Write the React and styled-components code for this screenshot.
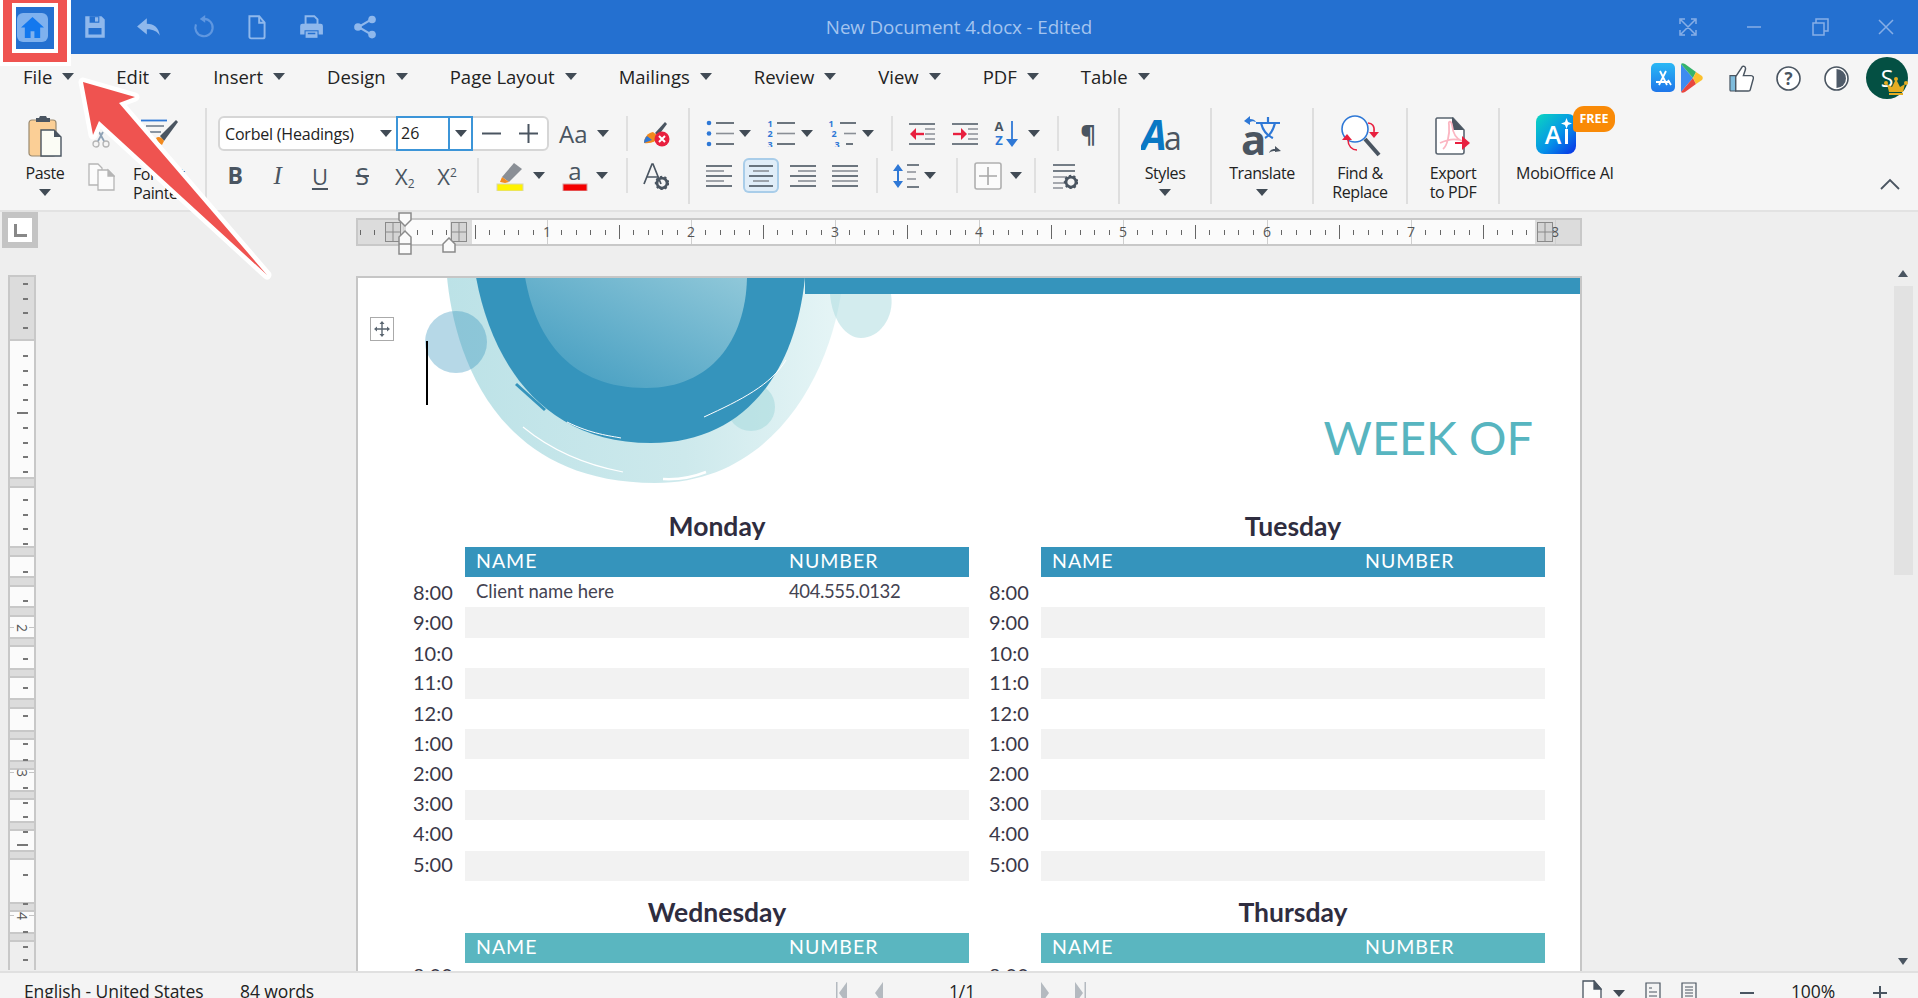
import React from 'react';
import styled, { createGlobalStyle } from 'styled-components';

const UI_FONT = '"Open Sans", "Noto Sans", sans-serif';
const DOC_FONT = 'Lato, "Open Sans", sans-serif';
const DARK = '#4a5561';
const BLUE = '#2e78d6';
const RED = '#e8203f';
const TITLE_ICON = '#8fb8ec';

const GlobalStyle = createGlobalStyle`
  html, body { margin: 0; padding: 0; height: 100%; overflow: hidden; }
  #root { height: 100%; }
  * { box-sizing: border-box; }
`;

const Window = styled.div`
  position: relative;
  width: 1918px;
  height: 998px;
  display: flex;
  flex-direction: column;
  overflow: hidden;
  background: #f5f5f5;
  font-family: ${UI_FONT};
  color: #222;
`;

/* title bar */
const TitleBar = styled.header`
  position: relative;
  flex: 0 0 54px;
  display: flex;
  align-items: center;
  background: #2470d0;
  padding-left: 17px;
`;

const HomeTile = styled.div`
  width: 31px;
  height: 29px;
  margin-right: 20px;
  border-radius: 6px;
  background: #7fb1ee;
  display: flex;
  align-items: center;
  justify-content: center;
`;

const QuickTool = styled.div`
  width: 54px;
  display: flex;
  justify-content: center;
`;

const TitleText = styled.div`
  position: absolute;
  left: 0;
  right: 0;
  text-align: center;
  font-size: 18.8px;
  color: #a3c4ef;
  letter-spacing: -0.1px;
`;

const WindowControls = styled.div`
  margin-left: auto;
  margin-right: -1px;
  display: flex;
`;

const WindowControl = styled.div`
  width: 66px;
  display: flex;
  justify-content: center;
`;

/* menu row */
const MenuBar = styled.nav`
  flex: 0 0 46px;
  display: flex;
  align-items: center;
  gap: 42px;
  padding: 0 0 2px 23px;
`;

const MenuItem = styled.div`
  display: flex;
  align-items: center;
  gap: 10px;
  font-size: 18.5px;
  color: #222;
`;

const Caret = styled.span`
  display: inline-block;
  flex: none;
  width: 0;
  height: 0;
  border-left: 6px solid transparent;
  border-right: 6px solid transparent;
  border-top: 7px solid #414b55;
`;

const MenuRight = styled.div`
  position: absolute;
  right: 10px;
  top: 56px;
  display: flex;
  align-items: center;
  height: 44px;
`;

const MenuIcon = styled.div`
  display: flex;
  justify-content: center;
  width: ${(p) => p.$w}px;
  margin-left: ${(p) => p.$ml || 0}px;
`;

const Avatar = styled.div`
  position: relative;
  width: 42px;
  height: 42px;
  border-radius: 50%;
  background: #045043;
  color: #fff;
  font-size: 23px;
  line-height: 42px;
  text-align: center;
  margin-left: 6px;
`;

const Crown = styled.svg`
  position: absolute;
  right: 0;
  bottom: 4px;
`;

/* ribbon */
const Ribbon = styled.section`
  flex: 0 0 112px;
  display: flex;
  padding-top: 8px;
  border-bottom: 2px solid #e2e2e2;
`;

const Group = styled.div`
  position: relative;
  flex: 0 0 ${(p) => p.$w}px;
  height: 96px;
  border-right: ${(p) => (p.$last ? 'none' : '2px solid #dedede')};
`;

const LabeledGroup = styled(Group)`
  display: flex;
  flex-direction: column;
  align-items: center;
  padding-top: 7px;
`;

const IconSlot = styled.div`
  height: 41px;
  display: flex;
  align-items: center;
  justify-content: center;
`;

const Label = styled.div`
  margin-top: 8px;
  font-size: 16px;
  line-height: 19px;
  letter-spacing: -0.4px;
  text-align: center;
  white-space: pre-line;
  color: #222;
`;

const LabelCaret = styled(Caret)`
  margin-top: 6px;
`;

const ClipboardGroup = styled(Group)`
  display: flex;
`;

const PasteCol = styled.div`
  width: 90px;
  display: flex;
  flex-direction: column;
  align-items: center;
  padding-top: 7px;
`;

const SmallCol = styled.div`
  width: 42px;
  margin-left: -10px;
  display: flex;
  flex-direction: column;
  align-items: center;
  padding-top: 22px;
  gap: 15px;
`;

const PainterCol = styled.div`
  flex: 1;
  padding: 11px 0 0 11px;
`;

const PainterIconWrap = styled.div`
  height: 36px;
  padding-left: 7px;
`;

const PainterLabel = styled(Label)`
  margin-top: 10px;
  text-align: left;
`;

const ToolGroup = styled(Group)`
  display: flex;
  flex-direction: column;
  gap: 7px;
  padding-top: 8px;
`;

const ToolRow = styled.div`
  height: 35px;
  display: flex;
  align-items: center;
  padding-left: ${(p) => p.$pl || 0}px;
`;

const Tool = styled.div`
  flex: 0 0 ${(p) => p.$w}px;
  height: 35px;
  display: flex;
  align-items: center;
  justify-content: ${(p) => (p.$pl !== undefined ? 'flex-start' : 'center')};
  padding-left: ${(p) => p.$pl || 0}px;
  gap: ${(p) => p.$gap || 0}px;
  border-radius: 6px;
  ${(p) => p.$active && 'background: #e0edf8; box-shadow: inset 0 0 0 2px #a9cde9; margin: 0 3px; flex-basis: 36px;'}
`;

const ToolSep = styled.div`
  flex: none;
  width: 2px;
  height: 35px;
  background: #e0e0e0;
  margin-left: ${(p) => p.$ml || 0}px;
`;

const FontCombo = styled.div`
  flex: 0 0 331px;
  height: 35px;
  display: flex;
  align-items: center;
  background: #fff;
  border: 2px solid #d6d6d6;
  border-radius: 6px;
`;

const FontName = styled.div`
  flex: 0 0 176px;
  display: flex;
  align-items: center;
  justify-content: space-between;
  padding: 0 4px 0 5px;
  font-size: 16px;
  letter-spacing: -0.2px;
`;

const SizeBox = styled.div`
  flex: 0 0 77px;
  height: 35px;
  display: flex;
  align-items: center;
  border: 2px solid #3c95d8;
  font-size: 16px;
`;

const SizeValue = styled.div`
  flex: 1;
  padding-left: 3px;
  height: 100%;
  line-height: 31px;
  border-right: 2px solid #3c95d8;
`;

const SizeArrow = styled.div`
  flex: 0 0 21px;
  display: flex;
  justify-content: center;
`;

const StepButton = styled.div`
  flex: 1;
  display: flex;
  justify-content: center;
`;

const CollapseButton = styled.svg`
  position: absolute;
  right: 18px;
  bottom: 14px;
`;

const LetterTool = styled.span`
  font-family: ${(p) => (p.$serif ? '"Liberation Serif", serif' : UI_FONT)};
  font-size: ${(p) => p.$size || 22}px;
  font-weight: ${(p) => p.$weight || 400};
  font-style: ${(p) => (p.$italic ? 'italic' : 'normal')};
  color: ${DARK};
  text-decoration: ${(p) => p.$decor || 'none'};
  text-decoration-thickness: 2px;
  text-underline-offset: 3px;
  line-height: 1;
`;

const Script = styled.sub`
  font-size: 12px;
  line-height: 0;
  vertical-align: ${(p) => (p.$up ? '8px' : '-3px')};
`;

/* workspace */
const Workspace = styled.main`
  flex: 1;
  min-height: 0;
  display: grid;
  grid-template-columns: 356px 1226px 1fr;
  grid-template-rows: 64px 1fr;
  background: #eeeeee;
  overflow: hidden;
`;

const RulerCorner = styled.div`
  width: 36px;
  height: 36px;
  margin-left: 2px;
  background: #fff;
  border: 6px solid #c4c4c4;
  display: flex;
  align-items: center;
  justify-content: center;
`;

const CornerGlyph = styled.div`
  width: 13px;
  height: 13px;
  border-left: 3px solid #888;
  border-bottom: 3px solid #888;
`;

const HRuler = styled.div`
  position: relative;
  width: 1226px;
  height: 28px;
  margin-top: 6px;
  display: flex;
  border: 2px solid #c8c8c8;
`;

const RulerPart = styled.div`
  flex: 0 0 ${(p) => p.$w}px;
  background: ${(p) => (p.$gray ? '#dcdcdc' : '#fbfbfb')};
`;

const HTick = styled.i`
  position: absolute;
  top: ${(p) => (p.$tall ? 5 : 10)}px;
  width: 1px;
  height: ${(p) => (p.$tall ? 14 : 5)}px;
  background: #666;
`;

const HLine = styled.i`
  position: absolute;
  top: 0;
  bottom: 0;
  width: 1px;
  background: #cfcfcf;
`;

const HNumber = styled.span`
  position: absolute;
  top: 2px;
  width: 14px;
  margin-left: -7px;
  text-align: center;
  font-size: 14px;
  line-height: 20px;
  color: #555;
`;

const RulerMark = styled.svg`
  position: absolute;
  left: ${(p) => p.$x}px;
  top: ${(p) => p.$y}px;
`;

const VRuler = styled.div`
  position: relative;
  width: 28px;
  height: 695px;
  margin: -1px 0 0 8px;
  display: flex;
  flex-direction: column;
  border-left: 2px solid #c8c8c8;
  border-right: 2px solid #c8c8c8;
`;

const VBand = styled.div`
  flex: 0 0 ${(p) => p.$h}px;
  background: ${(p) => (p.$gray ? '#dcdcdc' : '#fbfbfb')};
  ${(p) => p.$gray && 'border-top: 2px solid #c8c8c8; border-bottom: 2px solid #c8c8c8;'}
`;

const VTick = styled.i`
  position: absolute;
  right: 6px;
  width: ${(p) => (p.$long ? 11 : 5)}px;
  height: 1.5px;
  background: #777;
`;

const VNumber = styled.span`
  position: absolute;
  left: 5px;
  width: 14px;
  text-align: center;
  font-size: 14px;
  line-height: 14px;
  color: #555;
  transform: rotate(90deg);
  &::before, &::after {
    content: '';
    position: absolute;
    left: 6px;
    width: 1px;
    height: 5px;
    background: #c4c4c4;
  }
  &::before { top: -5px; }
  &::after { bottom: -6px; }
`;

const Page = styled.div`
  position: relative;
  background: #fff;
  border: 2px solid #c6c6c6;
  border-bottom: 0;
  overflow: hidden;
  font-family: ${DOC_FONT};
  color: #2f2d3f;
`;

const PageBanner = styled.div`
  position: relative;
  z-index: 1;
  height: 16px;
  margin-left: 447px;
  background: #3594bc;
`;

const Artwork = styled.svg`
  position: absolute;
  left: 63px;
  top: -1px;
`;

const MoveHandle = styled.div`
  position: absolute;
  z-index: 2;
  left: 12px;
  top: 39px;
  width: 24px;
  height: 24px;
  background: #fff;
  border: 1.5px solid #aaa;
  display: flex;
  align-items: center;
  justify-content: center;
`;

const TextCursor = styled.div`
  position: absolute;
  z-index: 2;
  left: 68px;
  top: 63px;
  width: 2px;
  height: 64px;
  background: #000;
`;

const WeekHeader = styled.div`
  position: relative;
  height: 218px;
  padding: 115px 47px 0 0;
  text-align: right;
  font-size: 46.8px;
  line-height: 56px;
  font-weight: 400;
  color: #57b5c0;
`;

const WeekGrid = styled.div`
  display: grid;
  grid-template-columns: 556px 556px;
  column-gap: 20px;
  row-gap: 17px;
  padding-left: 55px;
`;

const Day = styled.div`
  display: grid;
  grid-template-columns: 52px 1fr;
`;

const DayName = styled.h2`
  grid-column: 2;
  margin: 0;
  height: 35px;
  text-align: center;
  font-size: 26.5px;
  line-height: 29px;
  font-weight: 700;
  color: #2f2d3f;
`;

const DayHead = styled.div`
  grid-column: 2;
  height: 30px;
  display: grid;
  grid-template-columns: 313px 1fr;
  padding: 0 0 3px 11px;
  align-items: center;
  background: ${(p) => p.$color};
  color: #fff;
  font-size: 19.5px;
  letter-spacing: 1px;
`;

const Time = styled.div`
  grid-column: 1;
  width: 40px;
  height: 30.4px;
  overflow: hidden;
  white-space: nowrap;
  font-size: 20px;
  line-height: 30px;
  color: #3a3848;
  transform: translateY(${(p) => p.$shift}px);
`;

const Slot = styled.div`
  grid-column: 2;
  height: 30.4px;
  display: grid;
  grid-template-columns: 313px 1fr;
  padding: 0 0 2px 11px;
  align-items: center;
  background: ${(p) => (p.$even ? '#f2f2f2' : '#fff')};
  font-size: 18.5px;
  line-height: 26px;
  color: #444352;
`;

const PhoneCell = styled.span`
  letter-spacing: -0.4px;
`;

const Scrollbar = styled.div`
  grid-column: 3;
  grid-row: 1 / span 2;
  justify-self: end;
  width: 20px;
  margin-right: 5px;
  padding-top: 58px;
  display: flex;
  flex-direction: column;
  align-items: center;
  height: 759px;
`;

const ScrollArrow = styled.i`
  width: 0;
  height: 0;
  border-left: 5px solid transparent;
  border-right: 5px solid transparent;
  ${(p) => (p.$down ? 'border-top' : 'border-bottom')}: 7px solid #4a5561;
  ${(p) => p.$down && 'margin-top: auto; margin-bottom: 6px;'}
`;

const ScrollThumb = styled.div`
  width: 19px;
  height: 289px;
  margin-top: 9px;
  background: #e2e2e2;
`;

/* status bar */
const StatusBar = styled.footer`
  flex: 0 0 27px;
  display: flex;
  align-items: flex-start;
  background: #f4f4f4;
  border-top: 2px solid #e0e0e0;
  padding-top: 6px;
  font-size: 17.5px;
  letter-spacing: -0.1px;
  line-height: 24px;
  color: #222;
  overflow: hidden;
`;

const StatusText = styled.span`
  flex: 0 0 ${(p) => p.$w}px;
  padding-left: ${(p) => p.$pl || 0}px;
  text-align: ${(p) => p.$align || 'left'};
`;

const StatusIcon = styled.div`
  flex: 0 0 ${(p) => p.$w}px;
  height: 24px;
  display: flex;
  align-items: center;
  justify-content: center;
  padding-top: 4px;
`;

/* annotation */
const Highlight = styled.div`
  position: absolute;
  z-index: 5;
  left: 3px;
  top: -6px;
  width: 64px;
  height: 68px;
  border: 9px solid #ef5350;
  box-shadow: 0 0 0 4px #fff, inset 0 0 0 4px #fff;
`;

const ArrowOverlay = styled.svg`
  position: absolute;
  z-index: 5;
  left: 0;
  top: 0;
`;

const FreeBadge = styled.div`
  position: absolute;
  left: 37px;
  top: -7px;
  width: 42px;
  height: 26px;
  border-radius: 11px 11px 11px 4px;
  background: #f98a07;
  color: #fff;
  font-size: 12.5px;
  font-weight: 700;
  line-height: 26px;
  text-align: center;
`;

const MobiTool = styled(LabeledGroup)`
  flex: 1;
  align-items: flex-start;
  padding: 5px 0 0 36px;
`;

const MobiWrap = styled.div`
  position: relative;
`;

const MobiLabel = styled(Label)`
  margin: 10px 0 0 -20px;
  letter-spacing: -0.2px;
`;

/* icons */
const TitleSvg = ({ size = 26, children }) => (
  <svg width={size} height={size} viewBox="0 0 24 24" fill="none">{children}</svg>
);

const SaveIcon = () => (
  <TitleSvg>
    <path d="M3 2h15l3 3v17H3z" fill={TITLE_ICON} />
    <path d="M7 2h9v6H7zM6 13h12v6H6z" fill="#2470d0" />
    <path d="M12 3h3v4h-3z" fill={TITLE_ICON} />
  </TitleSvg>
);
const UndoIcon = () => (
  <TitleSvg>
    <path d="M10 4v5c7 0 11 4 12 11-2-4-6-6-12-6v5L1 11.500z" fill={TITLE_ICON} />
  </TitleSvg>
);
const RedoIcon = () => (
  <TitleSvg>
    <path d="M13 4.500a8 8 0 1 1-7.500 5" stroke="#5f97e0" strokeWidth="2" />
    <path d="M14 1v7l-5-3.500z" fill="#5f97e0" />
  </TitleSvg>
);
const DocIcon = () => (
  <TitleSvg>
    <path d="M5 2h9l5 6v13a1.500 1.500 0 0 1-1.500 1.500h-11A1.500 1.500 0 0 1 5 21z" stroke={TITLE_ICON} strokeWidth="1.800" />
    <path d="M14 2v6h5" stroke={TITLE_ICON} strokeWidth="1.800" />
  </TitleSvg>
);
const PrintIcon = () => (
  <TitleSvg>
    <path d="M7 2h8l3 3v5H7z" stroke={TITLE_ICON} strokeWidth="1.800" />
    <path d="M4 9h17a2 2 0 0 1 2 2v8h-4v-4H6v4H2v-8a2 2 0 0 1 2-2z" fill={TITLE_ICON} />
    <path d="M7 16h11v6H7z" fill={TITLE_ICON} />
    <path d="M9 18h7" stroke="#2470d0" strokeWidth="1.400" />
  </TitleSvg>
);
const ShareIcon = () => (
  <TitleSvg>
    <path d="M18 5 6 12l12 7" stroke={TITLE_ICON} strokeWidth="2" />
    <circle cx="18.500" cy="5" r="3.500" fill={TITLE_ICON} />
    <circle cx="5.500" cy="12" r="3.500" fill={TITLE_ICON} />
    <circle cx="18.500" cy="19" r="3.500" fill={TITLE_ICON} />
  </TitleSvg>
);

const WinIcon = ({ children }) => (
  <svg width="18" height="18" viewBox="0 0 18 18" fill="none" stroke="#87aee6" strokeWidth="1.500">{children}</svg>
);

const AppStoreIcon = () => (
  <svg width="24" height="30" viewBox="0 0 24 30">
    <defs>
      <linearGradient id="appStore" x1="0" y1="0" x2="0" y2="1">
        <stop offset="0" stopColor="#2ab8f5" />
        <stop offset="1" stopColor="#1e76ea" />
      </linearGradient>
    </defs>
    <rect width="24" height="29" rx="5" fill="url(#appStore)" />
    <path d="M8 22 15 8M16 22 9 8M5 19h14M17 17l3 5" stroke="#fff" strokeWidth="1.800" fill="none" />
  </svg>
);
const PlayIcon = () => (
  <svg width="22" height="30" viewBox="0 0 22 30">
    <path d="M0 1v28l12-14z" fill="#3d8bf0" />
    <path d="M0 1c1-1 2-1 4 0l11 8-3 6z" fill="#35b36b" />
    <path d="M0 29c1 1 2 1 4 0l11-8-3-6z" fill="#e8463f" />
    <path d="M15 9l6 4c1 1 1 3 0 4l-6 4-3-6z" fill="#fbc02d" />
  </svg>
);
const ThumbIcon = () => (
  <svg width="25" height="29" viewBox="0 0 26 30">
    <path d="M1 12h6v16H2a1 1 0 0 1-1-1z" fill="#7fbcdc" stroke="#4a5561" strokeWidth="1.200" />
    <path d="M7 13 13 4c1-3 5-2 4 2l-2 6h8c2 0 3 2 2 4l-3 11c0 1-1 1-2 1H7z" fill="#fff" stroke="#4a5561" strokeWidth="1.500" />
  </svg>
);
const HelpIcon = () => (
  <svg width="25" height="25" viewBox="0 0 25 25">
    <circle cx="12.500" cy="12.500" r="11.500" fill="#fff" stroke="#4a5561" strokeWidth="1.600" />
    <text x="12.500" y="18.500" textAnchor="middle" fontSize="17" fontWeight="700" fontFamily="Open Sans" fill="#4a5561">?</text>
  </svg>
);
const ContrastIcon = () => (
  <svg width="25" height="25" viewBox="0 0 25 25">
    <circle cx="12.500" cy="12.500" r="11.500" fill="#fff" stroke="#4a5561" strokeWidth="1.600" />
    <path d="M12.500 3a9.500 9.500 0 0 1 0 19z" fill="#4f5b69" />
  </svg>
);

const PasteIcon = () => (
  <svg width="34" height="42" viewBox="0 0 34 42">
    <rect x="1" y="5" width="27" height="36" rx="3" fill="#fbcf96" stroke="#9a8a70" strokeWidth="1.200" />
    <path d="M8 7V3h3l1-2h6l1 2h3v4z" fill="#4a5561" />
    <path d="M13 15h13l7 7v19H13z" fill="#fbfcf5" stroke="#4a5561" strokeWidth="1.400" />
    <path d="M26 15v7h7z" fill="#4a5561" />
  </svg>
);
const CutIcon = () => (
  <svg width="20" height="18" viewBox="0 0 20 18" fill="none" stroke="#b5b5b5" strokeWidth="1.300">
    <circle cx="5" cy="14" r="3" />
    <circle cx="15" cy="14" r="3" />
    <path d="M7 11 12 2M13 11 8 2" stroke="#8fa2b5" strokeWidth="1.800" />
  </svg>
);
const CopyIcon = () => (
  <svg width="27" height="28" viewBox="0 0 27 28" fill="#fbfbfb" stroke="#b5b5b5" strokeWidth="1.300">
    <path d="M1 1h9l4 4v17H1z" />
    <path d="M10 7h10l6 6v14H10z" />
    <path d="M20 7v6h6z" fill="#b5b5b5" />
  </svg>
);
const PainterIcon = () => (
  <svg width="40" height="26" viewBox="0 0 40 26" fill="none">
    <path d="M1 1.500h26" stroke={BLUE} strokeWidth="1.800" />
    <path d="M6 7h18M10 13h11" stroke="#8a96a3" strokeWidth="2" />
    <path d="M20 17 36 1l2 2-14 19z" fill="#4a5561" />
    <path d="M16 19c2-2 6-1 8 3l-2 4c-2-1-4-3-6-7z" fill="#f28a1e" />
  </svg>
);

const SizeStep = ({ plus }) => (
  <svg width="19" height="19" viewBox="0 0 19 19" stroke="#4a5561" strokeWidth="2">
    <path d="M0 9.500h19" />
    {plus && <path d="M9.500 0v19" />}
  </svg>
);

const HighlighterIcon = () => (
  <svg width="28" height="30" viewBox="0 0 28 30">
    <path d="M6 16 18 2l8 6-13 13z" fill="#8a8f96" />
    <path d="M6 16l7 5-4 1-5-1z" fill="#f28a1e" />
    <rect x="1" y="23" width="26" height="7" fill="#fff200" stroke="#d8d8b0" />
  </svg>
);
const FontColorIcon = () => (
  <svg width="26" height="30" viewBox="0 0 26 30">
    <text x="13" y="19" textAnchor="middle" fontSize="24" fontFamily="Open Sans" fill="#4a5561">a</text>
    <rect x="1" y="23" width="24" height="7" fill="#f40000" stroke="#d8a0a0" />
  </svg>
);
const ClearFormatIcon = () => (
  <svg width="28" height="26" viewBox="0 0 28 26">
    <path d="M13 12 23 1l2 2-9 12z" fill="#4a5561" />
    <path d="M2 22c0-6 4-10 9-11l5 4c0 5-7 8-14 7z" fill="#f28a1e" />
    <path d="M2 22c0-3 1-5 3-7l5 4z" fill={BLUE} />
    <circle cx="20" cy="18" r="7.500" fill={RED} />
    <path d="M17 15l6 6m0-6-6 6" stroke="#fff" strokeWidth="2" />
  </svg>
);
const Gear = ({ x, y, r = 5 }) => (
  <g transform={`translate(${x} ${y})`}>
    <circle r={r} fill="none" stroke="#4a5561" strokeWidth={r * 0.55} />
    <circle r={r + 1.200} fill="none" stroke="#4a5561" strokeWidth="2" strokeDasharray="2.200 2.200" />
  </g>
);
const StyleSettingsIcon = () => (
  <svg width="26" height="28" viewBox="0 0 26 28">
    <path d="M1 22 9 2h1l8 20M4 15h11" fill="none" stroke="#4a5561" strokeWidth="1.700" />
    <Gear x={19} y={21} />
  </svg>
);

const ListIcon = ({ kind }) => {
  const lines = kind === 'multi'
    ? [[12, 28], [16, 28], [18, 25]]
    : [[10, 28], [10, 28], [10, 28]];
  const numbers = ['1', '2', '3'];
  return (
    <svg width="28" height="27" viewBox="0 0 28 27">
      {lines.map(([from, to], i) => (
        <path key={i} d={`M${from} ${3 + i * 10.500}H${to}`} stroke={i === 1 ? '#8a8f96' : '#4a5561'} strokeWidth="1.600" />
      ))}
      {numbers.map((n, i) => (kind === 'bullet'
        ? <circle key={n} cx="3" cy={3 + i * 10.500} r="2.300" fill={BLUE} />
        : <text key={n} x={kind === 'multi' ? 3 + i * 3 : 3} y={6.500 + i * 10.500} fontSize="9" fontWeight="700" fontFamily="Open Sans" fill={BLUE} textAnchor="middle">{n}</text>))}
    </svg>
  );
};

const IndentIcon = ({ flip }) => (
  <svg width="28" height="24" viewBox="0 0 28 24" stroke="#4a5561" strokeWidth="1.600" fill="none">
    <path d="M1 2h26M1 22h26" />
    <path d="M17 7h10M17 12h10M17 17h10" stroke="#8a8f96" />
    {flip ? <path d="M2 12h8" stroke={RED} strokeWidth="2.400" /> : <path d="M8 12h8" stroke={RED} strokeWidth="2.400" />}
    {flip
      ? <path d="M10 6l6 6-6 6z" fill={RED} stroke="none" />
      : <path d="M8 6l-6 6 6 6z" fill={RED} stroke="none" />}
  </svg>
);

const SortIcon = () => (
  <svg width="28" height="28" viewBox="0 0 28 28">
    <text x="6" y="11" fontSize="13" fontWeight="700" textAnchor="middle" fontFamily="Open Sans" fill={DARK}>A</text>
    <text x="6" y="25" fontSize="13" fontWeight="700" textAnchor="middle" fontFamily="Open Sans" fill={BLUE}>Z</text>
    <path d="M19 1v20" stroke={BLUE} strokeWidth="1.800" />
    <path d="M13 19h12l-6 8z" fill={BLUE} />
  </svg>
);

const AlignIcon = ({ rows }) => (
  <svg width="28" height="24" viewBox="0 0 28 24" strokeWidth="1.600">
    {rows.map(([from, to], i) => (
      <path key={i} d={`M${from} ${2 + i * 5}H${to}`} stroke={i % 2 ? '#8a8f96' : '#4a5561'} />
    ))}
  </svg>
);

const LineSpacingIcon = () => (
  <svg width="26" height="26" viewBox="0 0 26 26">
    <path d="M5 6v14" stroke={BLUE} strokeWidth="2" />
    <path d="M0 8 5 1l5 7zM0 18l5 7 5-7z" fill={BLUE} />
    <path d="M14 2h12M14 24h12" stroke="#4a5561" strokeWidth="1.600" />
    <path d="M14 9h9M14 16h9" stroke="#8a8f96" strokeWidth="1.600" />
  </svg>
);
const TableAddIcon = () => (
  <svg width="28" height="28" viewBox="0 0 28 28">
    <rect x="1" y="1" width="26" height="26" rx="2" fill="#fbfbfb" stroke="#b0b0b0" strokeWidth="1.600" />
    <path d="M14 5v18M5 14h18" stroke="#a8a8a8" strokeWidth="1.600" />
  </svg>
);
const ParaSettingsIcon = () => (
  <svg width="26" height="26" viewBox="0 0 26 26">
    <path d="M1 2h22M1 8h22" stroke="#4a5561" strokeWidth="1.600" />
    <path d="M1 14h14M1 20h12M1 25h10" stroke="#8a8f96" strokeWidth="1.600" />
    <Gear x={19} y={19} />
  </svg>
);

const StylesIcon = () => (
  <svg width="48" height="36" viewBox="0 0 48 36">
    <text x="0" y="32" fontSize="41" fontStyle="italic" fontWeight="700" fontFamily="Open Sans" fill="#0a78c4">A</text>
    <text x="23" y="32" fontSize="32" fontFamily="Open Sans" fill="#4a5561">a</text>
  </svg>
);
const TranslateIcon = () => (
  <svg width="40" height="42" viewBox="0 0 40 42">
    <path d="M14 8h24M26 2v6M19 8c2 8 7 13 12 15M33 8c-2 8-6 13-10 15" fill="none" stroke={BLUE} strokeWidth="2.200" />
    <path d="M2 6 8 1v3c3 0 5 1 6 3-3-1-4-1-6 0v3z" fill={BLUE} />
    <text x="-1" y="40" fontSize="42" fontWeight="700" fontFamily="Open Sans" fill="#4a5561">a</text>
    <path d="M27 38c1-3 3-4 6-4v-3l6 5-6 1v-1c-2 0-3 0-6 2z" fill="#4a5561" />
  </svg>
);
const FindIcon = () => (
  <svg width="46" height="44" viewBox="0 0 46 44" fill="none">
    <circle cx="18" cy="15" r="13" fill="#fff" stroke={BLUE} strokeWidth="1.600" />
    <path d="M28 25l14 16" stroke="#4a5561" strokeWidth="4" />
    <path d="M31 9c4 0 7 3 6 9" stroke={RED} strokeWidth="1.500" />
    <path d="M32 18h10l-5 6z" fill={RED} />
    <path d="M5 26h10l-5-6z" fill={RED} />
    <path d="M11 26c0 6 4 10 9 10" stroke={RED} strokeWidth="1.500" />
  </svg>
);
const ExportIcon = () => (
  <svg width="36" height="40" viewBox="0 0 36 40" fill="none">
    <path d="M2 2h16l11 12v22a2 2 0 0 1-2 2H3a2 2 0 0 1-2-2V3z" fill="#fff" stroke="#5a6570" strokeWidth="1.600" />
    <path d="M17 1l12 13H17z" fill="#4a5561" />
    <path d="M8 33c4-3 7-14 6-24-1-4 2-5 3 0 1 9 4 14 10 16M5 27c6-3 12-5 20-3" stroke="#fbb6c2" strokeWidth="1.800" />
    <path d="M20 27h9" stroke={RED} strokeWidth="2" />
    <path d="M27 20l8 7-8 7z" fill={RED} />
  </svg>
);
const MobiIcon = () => (
  <svg width="40" height="40" viewBox="0 0 40 40">
    <defs>
      <linearGradient id="mobi" x1="0" y1="0" x2="1" y2="1">
        <stop offset="0" stopColor="#0bd6c0" />
        <stop offset=".55" stopColor="#0592e8" />
        <stop offset="1" stopColor="#0a2ee6" />
      </linearGradient>
    </defs>
    <rect width="40" height="40" rx="8" fill="url(#mobi)" />
    <text x="17" y="30" textAnchor="middle" fontSize="25" fontFamily="Open Sans" fontWeight="600" fill="#fff">A</text>
    <path d="M29 15h3v15h-3z" fill="#fff" />
    <path d="M30.500 4l1.500 4 4 1.500-4 1.500-1.500 4-1.500-4-4-1.500 4-1.500z" fill="#fff" />
  </svg>
);

const MoveIcon = () => (
  <svg width="16" height="16" viewBox="0 0 16 16" fill="#5a6570">
    <path d="M7.300 3h1.400v10H7.300zM3 7.300h10v1.400H3z" />
    <path d="M8 0l2.500 3h-5zM8 16l-2.500-3h5zM0 8l3-2.500v5zM16 8l-3 2.500v-5z" />
  </svg>
);

const GridMark = ({ x }) => (
  <RulerMark $x={x} $y={2} width="16" height="20" viewBox="0 0 16 20">
    <rect x=".5" y=".5" width="15" height="19" fill="#d4d4d4" stroke="#8a8a8a" />
    <path d="M8 0v20M0 10h16" stroke="#8a8a8a" />
  </RulerMark>
);

const PageSide = () => (
  <svg width="20" height="26" viewBox="0 0 20 26" fill="#fafafa" stroke="#4a5561" strokeWidth="1.300">
    <path d="M1 1h11l7 8v17H1z" />
    <path d="M12 1v8h7z" fill="#4a5561" />
  </svg>
);
const PageView = ({ dense }) => (
  <svg width="16" height="22" viewBox="0 0 16 22" fill="#f4f4f4" stroke="#4a5561" strokeWidth="1.200">
    <path d="M1 1h14v20H1z" />
    <path d={dense ? 'M4 5h8M4 8h8M4 11h8M4 14h8M4 17h8' : 'M4 6h3M4 10h8M4 14h8'} />
  </svg>
);
const NavMark = ({ flip, bar }) => (
  <svg width="16" height="22" viewBox="0 0 16 22" fill="#b4bac0">
    <g transform={flip ? 'matrix(-1 0 0 1 16 0)' : undefined}>
      {bar && <path d="M1 0h1.500v22H1z" />}
      <path d="M12 0v22L4 11z" />
    </g>
  </svg>
);

/* data */
const TIMES = ['8:00', '9:00', '10:00', '11:00', '12:00', '1:00', '2:00', '3:00', '4:00', '5:00'];
const DAYS = [
  { name: 'Monday', color: '#3594bc', first: ['Client name here', '404.555.0132'], lift: 0 },
  { name: 'Tuesday', color: '#3594bc', lift: 0 },
  { name: 'Wednesday', color: '#5ab6c0', lift: -3 },
  { name: 'Thursday', color: '#5ab6c0', lift: -3 },
];
const MENUS = ['File', 'Edit', 'Insert', 'Design', 'Page Layout', 'Mailings', 'Review', 'View', 'PDF', 'Table'];

const RULER_PARTS = [[48, true], [44, false], [22, true], [1063, false], [45, true]];
const inchTicks = Array.from({ length: 84 }, (_, i) => i - 3);

const V_BANDS = [
  [66, true], [136, false], [11, true], [58, false], [11, true], [19, false], [11, true], [19, false],
  [11, true], [20, false], [10, true], [21, false], [10, true], [20, false], [11, true], [21, false],
  [10, true], [20, false], [10, true], [20, false], [10, true], [21, false], [10, true], [19, false],
  [10, true], [42, false], [10, true], [20, false], [10, true],
];
const V_TICKS = [283, 298, 312, 327, 355, 370, 384, 399, 427, 442, 456, 471, 499, 514, 528, 543, 571, 600, 658, 687, 715, 743, 759, 787, 802, 816, 831, 874, 903, 931, 946, 959];
const V_LONG = [412, 844];
const V_NUMBERS = [[628, '2'], [773, '3'], [916, '4']];

const AlignRows = {
  left: [[1, 27], [1, 19], [1, 27], [1, 19], [1, 27]],
  center: [[2, 26], [6, 22], [2, 26], [6, 22], [2, 26]],
  right: [[1, 27], [9, 27], [1, 27], [9, 27], [1, 27]],
  justify: [[1, 27], [1, 27], [1, 27], [1, 27], [1, 27]],
};

const App = () => {
  return (
    <Window>
      <GlobalStyle />

      <TitleBar>
        <HomeTile>
          <svg width="23" height="23" viewBox="0 0 24 24" fill="#1378ee">
            <path d="M12 1 0 12h4v11h6v-7h4v7h6V12h4z" />
          </svg>
        </HomeTile>
        <QuickTool><SaveIcon /></QuickTool>
        <QuickTool><UndoIcon /></QuickTool>
        <QuickTool><RedoIcon /></QuickTool>
        <QuickTool><DocIcon /></QuickTool>
        <QuickTool><PrintIcon /></QuickTool>
        <QuickTool><ShareIcon /></QuickTool>
        <TitleText>New Document 4.docx - Edited</TitleText>
        <WindowControls>
          <WindowControl>
            <WinIcon><path d="M2 2l14 14M16 2 2 16M1 6V1h5M12 1h5v5M17 12v5h-5M6 17H1v-5" /></WinIcon>
          </WindowControl>
          <WindowControl><WinIcon><path d="M2 9h14" /></WinIcon></WindowControl>
          <WindowControl><WinIcon><path d="M2 5h11v12H2zM5 5V1h12v12h-4" /></WinIcon></WindowControl>
          <WindowControl><WinIcon><path d="M2 2l14 14M16 2 2 16" /></WinIcon></WindowControl>
        </WindowControls>
      </TitleBar>

      <MenuBar>
        {MENUS.map((name) => (
          <MenuItem key={name}>{name}<Caret /></MenuItem>
        ))}
      </MenuBar>
      <MenuRight>
        <AppStoreIcon />
        <MenuIcon $w={34}><PlayIcon /></MenuIcon>
        <MenuIcon $w={46} $ml={9}><ThumbIcon /></MenuIcon>
        <MenuIcon $w={48}><HelpIcon /></MenuIcon>
        <MenuIcon $w={48}><ContrastIcon /></MenuIcon>
        <Avatar>
          S
          <Crown width="24" height="18" viewBox="0 0 24 18" fill="#e5ad22">
            <path d="M3 7l5 3 4-8 4 8 5-3-2 8H5z" />
            <path d="M5 16h14v2H5z" />
            <circle cx="2" cy="6" r="2" /><circle cx="12" cy="2" r="2" /><circle cx="22" cy="6" r="2" />
          </Crown>
        </Avatar>
      </MenuRight>

      <Ribbon>
        <ClipboardGroup $w={207}>
          <PasteCol>
            <IconSlot><PasteIcon /></IconSlot>
            <Label>Paste</Label>
            <LabelCaret />
          </PasteCol>
          <SmallCol>
            <CutIcon />
            <CopyIcon />
          </SmallCol>
          <PainterCol>
            <PainterIconWrap><PainterIcon /></PainterIconWrap>
            <PainterLabel>{'Format\nPainter'}</PainterLabel>
          </PainterCol>
        </ClipboardGroup>

        <ToolGroup $w={483}>
          <ToolRow $pl={11}>
            <FontCombo>
              <FontName>Corbel (Headings)<Caret /></FontName>
              <SizeBox>
                <SizeValue>26</SizeValue>
                <SizeArrow><Caret /></SizeArrow>
              </SizeBox>
              <StepButton><SizeStep /></StepButton>
              <StepButton><SizeStep plus /></StepButton>
            </FontCombo>
            <Tool $w={65} $pl={10} $gap={9}><LetterTool $size={24}>Aa</LetterTool><Caret /></Tool>
            <ToolSep $ml={12} />
            <Tool $w={56}><ClearFormatIcon /></Tool>
          </ToolRow>
          <ToolRow $pl={7}>
            <Tool $w={42.4}><LetterTool $weight={700} $size={23}>B</LetterTool></Tool>
            <Tool $w={42.4}><LetterTool $italic $serif $size={25}>I</LetterTool></Tool>
            <Tool $w={42.4}><LetterTool $size={22} $decor="underline">U</LetterTool></Tool>
            <Tool $w={42.4}><LetterTool $size={24} $decor="line-through">S</LetterTool></Tool>
            <Tool $w={42.4}><LetterTool $size={22}>X<Script>2</Script></LetterTool></Tool>
            <Tool $w={42.4}><LetterTool $size={22}>X<Script $up>2</Script></LetterTool></Tool>
            <ToolSep $ml={9} />
            <Tool $w={73} $pl={17} $gap={9}><HighlighterIcon /><Caret /></Tool>
            <Tool $w={62} $pl={10} $gap={8}><FontColorIcon /><Caret /></Tool>
            <ToolSep $ml={12} />
            <Tool $w={56}><StyleSettingsIcon /></Tool>
          </ToolRow>
        </ToolGroup>

        <ToolGroup $w={430}>
          <ToolRow>
            <Tool $w={71} $pl={16} $gap={5}><ListIcon kind="bullet" /><Caret /></Tool>
            <Tool $w={61} $pl={6} $gap={6}><ListIcon kind="number" /><Caret /></Tool>
            <Tool $w={69} $pl={6} $gap={6}><ListIcon kind="multi" /><Caret /></Tool>
            <ToolSep />
            <Tool $w={42} $pl={15}><IndentIcon /></Tool>
            <Tool $w={50} $pl={15}><IndentIcon flip /></Tool>
            <Tool $w={71} $pl={7} $gap={7}><SortIcon /><Caret /></Tool>
            <ToolSep />
            <Tool $w={58}><LetterTool $size={24} $weight={700}>¶</LetterTool></Tool>
          </ToolRow>
          <ToolRow $pl={8}>
            <Tool $w={42}><AlignIcon rows={AlignRows.left} /></Tool>
            <Tool $w={42} $active><AlignIcon rows={AlignRows.center} /></Tool>
            <Tool $w={42}><AlignIcon rows={AlignRows.right} /></Tool>
            <Tool $w={42}><AlignIcon rows={AlignRows.justify} /></Tool>
            <ToolSep $ml={10} />
            <Tool $w={78} $pl={15} $gap={5}><LineSpacingIcon /><Caret /></Tool>
            <ToolSep />
            <Tool $w={76} $pl={16} $gap={8}><TableAddIcon /><Caret /></Tool>
            <ToolSep />
            <Tool $w={58}><ParaSettingsIcon /></Tool>
          </ToolRow>
        </ToolGroup>

        <LabeledGroup $w={92}>
          <IconSlot><StylesIcon /></IconSlot>
          <Label>Styles</Label>
          <LabelCaret />
        </LabeledGroup>
        <LabeledGroup $w={102}>
          <IconSlot><TranslateIcon /></IconSlot>
          <Label>Translate</Label>
          <LabelCaret />
        </LabeledGroup>
        <LabeledGroup $w={94}>
          <IconSlot><FindIcon /></IconSlot>
          <Label>{'Find &\nReplace'}</Label>
        </LabeledGroup>
        <LabeledGroup $w={92}>
          <IconSlot><ExportIcon /></IconSlot>
          <Label>{'Export\nto PDF'}</Label>
        </LabeledGroup>
        <MobiTool $last>
          <MobiWrap>
            <IconSlot><MobiIcon /></IconSlot>
            <FreeBadge>FREE</FreeBadge>
          </MobiWrap>
          <MobiLabel>MobiOffice AI</MobiLabel>
          <CollapseButton width="20" height="12" viewBox="0 0 20 12" fill="none" stroke="#4a5561" strokeWidth="1.800">
            <path d="M1 11 10 2l9 9" />
          </CollapseButton>
        </MobiTool>
      </Ribbon>

      <Workspace>
        <RulerCorner><CornerGlyph /></RulerCorner>
        <HRuler>
          {RULER_PARTS.map(([w, gray], i) => <RulerPart key={i} $w={w} $gray={gray} />)}
          {inchTicks.map((i) => {
            const left = 45 + i * 14.4;
            if (i % 10 === 0) {
              return (
                <React.Fragment key={i}>
                  <HLine style={{ left }} />
                  {i > 0 && <HNumber style={{ left }}>{i / 10}</HNumber>}
                </React.Fragment>
              );
            }
            return <HTick key={i} $tall={i % 5 === 0} style={{ left }} />;
          })}
          <GridMark x={27} />
          <GridMark x={93} />
          <GridMark x={1179} />
          <RulerMark $x={39} $y={-8} width="16" height="48" viewBox="0 0 16 48" fill="#fafafa" stroke="#8a8a8a" strokeWidth="1.500">
            <path d="M2 1h12v7l-6 6-6-6z" />
            <path d="M2 32v-7l6-6 6 6v7zM2 32h12v10H2z" />
          </RulerMark>
          <RulerMark $x={83} $y={17} width="16" height="16" viewBox="0 0 16 16" fill="#fafafa" stroke="#8a8a8a" strokeWidth="1.500">
            <path d="M2 15V7l6-6 6 6v8z" />
          </RulerMark>
        </HRuler>
        <Scrollbar>
          <ScrollArrow />
          <ScrollThumb />
          <ScrollArrow $down />
        </Scrollbar>

        <VRuler>
          {V_BANDS.map(([h, gray], i) => <VBand key={i} $h={h} $gray={gray} />)}
          {V_TICKS.map((y) => <VTick key={y} style={{ top: y - 275 }} />)}
          {V_LONG.map((y) => <VTick key={y} $long style={{ top: y - 275 }} />)}
          {V_NUMBERS.map(([y, n]) => <VNumber key={n} style={{ top: y - 282 }}>{n}</VNumber>)}
        </VRuler>

        <Page>
          <PageBanner />
          <Artwork width="480" height="213" viewBox="420 277 480 213">
            <defs>
              <linearGradient id="pale" x1="0" y1="0" x2="1" y2="0">
                <stop offset="0" stopColor="#bce2e7" />
                <stop offset=".6" stopColor="#cde9ec" />
                <stop offset="1" stopColor="#e6f5f6" />
              </linearGradient>
              <linearGradient id="inner" x1="0" y1="1" x2="1" y2="0">
                <stop offset="0" stopColor="#3e9abf" />
                <stop offset="1" stopColor="#90c8d9" />
              </linearGradient>
            </defs>
            <path d="M446 277C452 340 485 483 654 483C780 483 835 360 842 277Z" fill="url(#pale)" />
            <path d="M829 294C831 320 845 338 860 338C878 338 894 318 890 294Z" fill="#a8dade" opacity=".5" />
            <circle cx="750" cy="407" r="24" fill="#a8dade" opacity=".6" />
            <circle cx="455" cy="342" r="31" fill="#3594bc" opacity=".36" />
            <path d="M475 277C490 360 540 443 650 443C745 443 795 370 804 277Z" fill="#3594bc" />
            <path d="M524 277C535 340 570 388 645 388C710 388 745 340 746 277Z" fill="url(#inner)" />
            <path d="M522 427C550 450 585 465 622 472" fill="none" stroke="#fff" strokeWidth="1.200" />
            <path d="M703 417C740 400 770 385 785 360" fill="none" stroke="#fff" strokeWidth="1" />
            <path d="M662 479C680 480 695 476 705 472" fill="none" stroke="#fff" strokeWidth="2.500" />
            <path d="M515 384 544 410" fill="none" stroke="#3594bc" strokeWidth="3" />
            <path d="M566 422C590 434 610 436 620 438" fill="none" stroke="#fff" strokeWidth="1" />
          </Artwork>
          <MoveHandle><MoveIcon /></MoveHandle>
          <TextCursor />
          <WeekHeader>WEEK OF</WeekHeader>
          <WeekGrid>
            {DAYS.map((day) => (
              <Day key={day.name}>
                <DayName>{day.name}</DayName>
                <DayHead $color={day.color}>
                  <span>NAME</span>
                  <span>NUMBER</span>
                </DayHead>
                {TIMES.map((time, i) => (
                  <React.Fragment key={time}>
                    <Time $shift={day.lift - i * 0.25}>{time}</Time>
                    <Slot $even={i % 2 === 1}>
                      {i === 0 && day.first && (
                        <>
                          <span>{day.first[0]}</span>
                          <PhoneCell>{day.first[1]}</PhoneCell>
                        </>
                      )}
                    </Slot>
                  </React.Fragment>
                ))}
              </Day>
            ))}
          </WeekGrid>
        </Page>
      </Workspace>

      <StatusBar>
        <StatusText $w={240} $pl={24}>English - United States</StatusText>
        <StatusText $w={595}>84 words</StatusText>
        <StatusIcon $w={16}><NavMark bar /></StatusIcon>
        <StatusIcon $w={20} />
        <StatusIcon $w={16}><NavMark /></StatusIcon>
        <StatusText $w={150} $align="center">1/1</StatusText>
        <StatusIcon $w={16}><NavMark flip /></StatusIcon>
        <StatusIcon $w={18} />
        <StatusIcon $w={16}><NavMark flip bar /></StatusIcon>
        <StatusIcon $w={493} />
        <StatusIcon $w={24}><PageSide /></StatusIcon>
        <StatusIcon $w={30}><Caret /></StatusIcon>
        <StatusIcon $w={1} />
        <StatusIcon $w={36}><PageView /></StatusIcon>
        <StatusIcon $w={36}><PageView dense /></StatusIcon>
        <StatusIcon $w={80}><svg width="14" height="2"><rect width="14" height="2" fill="#4a5561" /></svg></StatusIcon>
        <StatusText $w={52} $align="center">100%</StatusText>
        <StatusIcon $w={81}>
          <svg width="14" height="14" viewBox="0 0 14 14" stroke="#4a5561" strokeWidth="2"><path d="M0 7h14M7 0v14" /></svg>
        </StatusIcon>
      </StatusBar>

      <Highlight />
      <ArrowOverlay width="300" height="300" viewBox="0 0 300 300">
        <path
          d="M83 82 135 97 119 103 267 275 99 121 93 135Z"
          fill="#ef5350"
          stroke="#fff"
          strokeWidth="9"
          strokeLinejoin="round"
          paintOrder="stroke"
        />
      </ArrowOverlay>
    </Window>
  );
};

export default App;
